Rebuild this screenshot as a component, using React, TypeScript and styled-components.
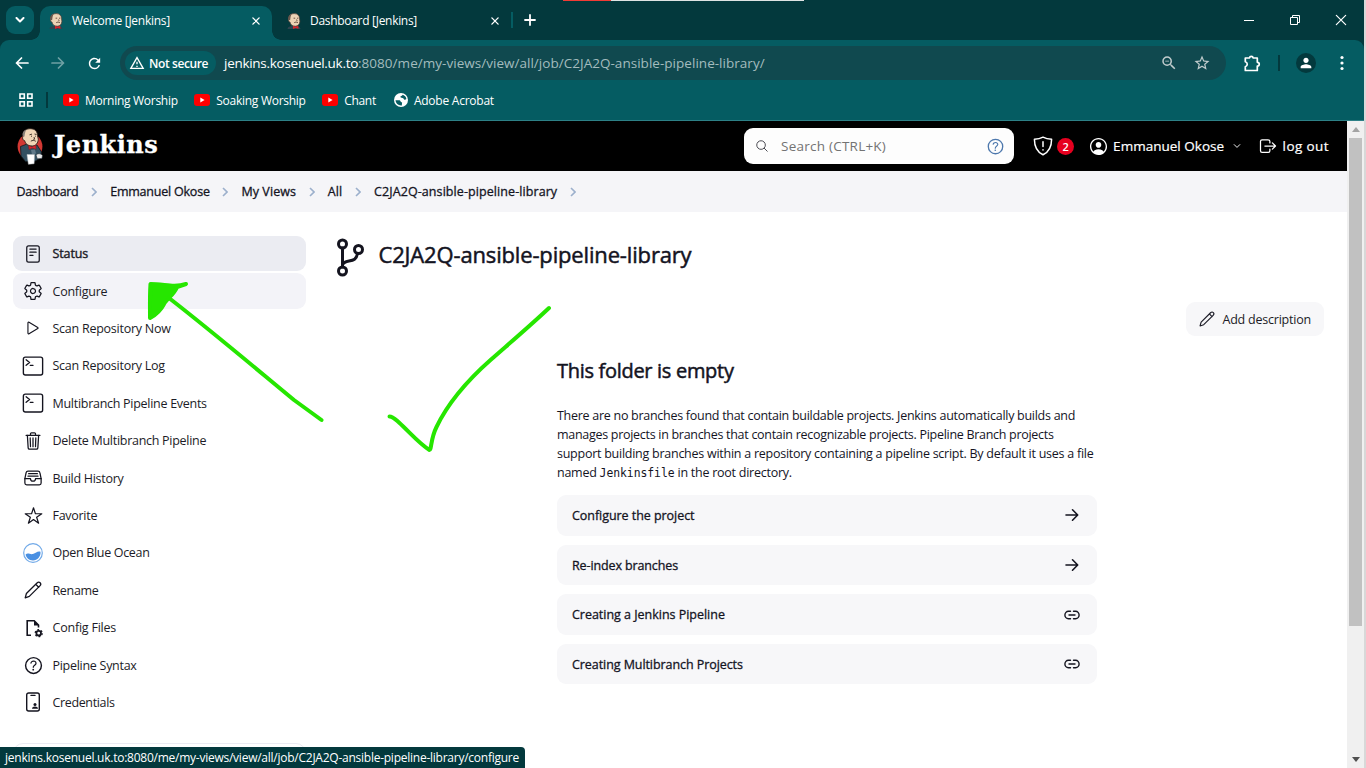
import React from "react";
import styled, { createGlobalStyle, css } from "styled-components";
import {
  IoSettingsOutline,
  IoPlayOutline,
  IoTerminalOutline,
  IoTrashOutline,
  IoFileTrayFullOutline,
  IoStarOutline,
  IoHelpCircleOutline,
  IoPersonCircleOutline,
  IoLogOutOutline,
  IoChevronDown,
  IoSearchOutline,
  IoReaderOutline,
} from "react-icons/io5";
import { MdPerson, MdStarOutline, MdZoomOut, MdRefresh, MdOutlineWarningAmber } from "react-icons/md";

const color = {
  strip: "#03393d",
  toolbar: "#055c62",
  field: "#10494f",
  ink: "#14141f",
  soft: "#f7f7f9",
};

const GlobalStyle = createGlobalStyle`
  * { box-sizing: border-box; }
  body {
    margin: 0;
    overflow: hidden;
    background: #d8d8d8;
    font-family: "Open Sans", "Noto Sans", sans-serif;
    color: ${color.ink};
  }
  svg { display: block; flex: none; }
  h1, h2, p { margin: 0; }
`;

/* $heft thickens regular glyphs to a medium weight */
const Txt = styled.span<{ $track?: number; $heft?: number }>`
  white-space: pre;
  letter-spacing: ${(p) => p.$track ?? 0}px;
  -webkit-text-stroke: ${(p) => p.$heft ?? 0}px currentColor;
`;

const Window = styled.div`
  position: relative;
  width: 1364px;
  height: 768px;
  display: flex;
  flex-direction: column;
  background: #fff;
  overflow: hidden;
`;

/* Browser chrome */
const TabStrip = styled.div`
  height: 40px;
  flex: none;
  display: flex;
  align-items: flex-end;
  padding-left: 6px;
  background: ${color.strip};
  color: #fff;
`;
const TabSearch = styled.div`
  width: 28px;
  height: 28px;
  margin: 0 6px 6px 0;
  border-radius: 9px;
  background: ${color.toolbar};
  display: grid;
  place-items: center;
`;
const Tab = styled.div<{ $active?: boolean }>`
  position: relative;
  width: ${(p) => (p.$active ? 232 : 239)}px;
  height: 34px;
  padding: 0 12px 5px ${(p) => (p.$active ? 8 : 14)}px;
  display: flex;
  align-items: center;
  gap: 8px;
  font-size: 12px;
  border-radius: 10px 10px 0 0;
  ${(p) =>
    p.$active &&
    css`
      background: ${color.toolbar};
      &::before,
      &::after {
        content: "";
        position: absolute;
        bottom: 0;
        width: 9px;
        height: 9px;
      }
      &::before {
        left: -9px;
        background: radial-gradient(circle at 0 0, transparent 8.5px, ${color.toolbar} 9px);
      }
      &::after {
        right: -9px;
        background: radial-gradient(circle at 100% 0, transparent 8.5px, ${color.toolbar} 9px);
      }
    `}
  & > span { flex: 1; }
`;
const TabDivider = styled.div`
  width: 2px;
  height: 16px;
  margin: 0 11px 12px 0;
  background: ${color.toolbar};
`;
const NewTab = styled.div`
  margin-bottom: 14px;
`;
const WindowControls = styled.div`
  margin-left: auto;
  height: 40px;
  padding-right: 17px;
  display: flex;
  align-items: center;
  gap: 34px;
`;
const ToolbarWrap = styled.div`
  flex: none;
  background: ${color.strip};
`;
const Chrome = styled.div`
  height: 81px;
  background: ${color.toolbar};
  border-radius: 9px 9px 0 0;
  border-bottom: 1px solid #2d8086;
  color: #fff;
`;
const Toolbar = styled.div`
  height: 46px;
  padding: 0 14px;
  display: flex;
  align-items: center;
`;
const NavButton = styled.div<{ $dim?: boolean }>`
  width: 36px;
  display: flex;
  padding-left: 1px;
  opacity: ${(p) => (p.$dim ? 0.42 : 1)};
`;
const ReloadButton = styled(NavButton)`
  padding-left: 0;
`;
const Omnibox = styled.div`
  width: 1106px;
  height: 34px;
  margin-left: -2px;
  padding: 0 15px 0 5px;
  display: flex;
  align-items: center;
  border-radius: 17px;
  background: ${color.field};
  font-size: 13.5px;
`;
const SecurityChip = styled.div`
  width: 91px;
  height: 24px;
  margin-right: 8px;
  padding-left: 4px;
  display: flex;
  align-items: center;
  gap: 4px;
  border-radius: 12px;
  background: ${color.toolbar};
  font-size: 12px;
  font-weight: 600;
`;
const UrlPath = styled(Txt)`
  color: #a3bcbe;
  flex: 1;
`;
const FieldIcons = styled.div`
  display: flex;
  gap: 15px;
  color: #c1cccd;
`;
const ToolbarEnd = styled.div`
  flex: 1;
  display: flex;
  align-items: center;
  padding-left: 18px;
`;
const ChromeDivider = styled.div<{ $before: number; $after: number }>`
  width: 2px;
  height: 16px;
  margin: 0 ${(p) => p.$after}px 0 ${(p) => p.$before}px;
  background: ${color.strip};
`;
const Avatar = styled.div`
  width: 20px;
  height: 20px;
  margin-right: 24px;
  display: grid;
  place-items: center;
  border-radius: 50%;
  background: ${color.strip};
`;
const Bookmarks = styled.div`
  height: 28px;
  padding-left: 19px;
  display: flex;
  align-items: center;
  font-size: 12px;
`;
const Bookmark = styled.div<{ $gap: number }>`
  display: flex;
  align-items: center;
  gap: 6px;
  margin-right: ${(p) => p.$gap}px;
`;
const RecordingBar = styled.div`
  position: absolute;
  top: 0;
  left: 563px;
  width: 241px;
  height: 1px;
  background: linear-gradient(90deg, #f23b35 48px, #dfe4e4 48px);
`;

/* Page */
const Viewport = styled.div`
  flex: 1;
  min-height: 0;
  display: flex;
`;
const Page = styled.div`
  width: 1347px;
  display: flex;
  flex-direction: column;
`;
const Header = styled.header`
  height: 50px;
  flex: none;
  padding: 0 18px 0 17px;
  display: flex;
  align-items: center;
  background: #000;
  color: #fff;
  font-size: 13.5px;
`;
const Brand = styled.div`
  flex: 1;
  display: flex;
  align-items: center;
  gap: 10px;
`;
const BrandName = styled(Txt)`
  font-family: "DejaVu Serif", "Liberation Serif", serif;
  font-weight: 700;
  font-size: 24px;
  line-height: 30px;
  padding-bottom: 3px;
`;
const SearchBox = styled.div`
  width: 270px;
  height: 36px;
  padding: 0 8px 0 11px;
  display: flex;
  align-items: center;
  border-radius: 9px;
  background: #fdfdfd;
  color: #34343c;
`;
const Placeholder = styled(Txt)`
  flex: 1;
  margin-left: 12px;
  color: #737373;
`;
const HelpLink = styled.div`
  color: #4d78ad;
`;
const Alerts = styled.div`
  display: flex;
  align-items: center;
  gap: 4px;
  margin-left: 19px;
`;
const Count = styled.span`
  width: 17px;
  height: 17px;
  border-radius: 50%;
  background: #e6001f;
  font-size: 11px;
  font-weight: 600;
  line-height: 17px;
  text-align: center;
`;
const HeaderLink = styled.div<{ $before: number; $gap?: number }>`
  display: flex;
  align-items: center;
  gap: ${(p) => p.$gap ?? 4}px;
  margin-left: ${(p) => p.$before}px;
`;
const Crumbs = styled.nav`
  height: 41px;
  flex: none;
  padding-left: 16.5px;
  display: flex;
  align-items: center;
  background: #f5f5f8;
  font-size: 12.5px;
`;
const CrumbArrow = styled.svg`
  margin: 1px 13px 0 12.7px;
  stroke: #9cb0cc;
  fill: none;
  stroke-width: 1.6;
`;
const Columns = styled.div`
  flex: 1;
  min-height: 0;
  display: flex;
  padding: 24px 23px 0 13px;
`;
const Sidebar = styled.aside`
  width: 293px;
  display: flex;
  flex-direction: column;
  gap: 2.4px;
`;
const Task = styled.div<{ $tone?: "active" | "hover" }>`
  height: ${(p) => (p.$tone === "hover" ? 35.8 : 35)}px;
  margin-bottom: ${(p) => (p.$tone === "hover" ? -0.6 : 0)}px;
  flex: none;
  padding-left: 9px;
  display: flex;
  align-items: center;
  gap: 8.5px;
  border-radius: 9px;
  font-size: 12.5px;
  color: #1c1c27;
  background: ${(p) => (p.$tone === "active" ? "#ebecf2" : p.$tone === "hover" ? "#f3f3f8" : "transparent")};
`;
const IconSlot = styled.div`
  width: 22px;
  display: flex;
  justify-content: center;
  color: ${color.ink};
`;
const HistoryCard = styled.div`
  height: 60px;
  flex: none;
  margin-top: 20.6px;
  border: 1px solid #ebebf2;
  border-radius: 10px;
`;
const Main = styled.main`
  flex: 1;
  padding-left: 30px;
  display: flex;
  flex-direction: column;
`;
const Title = styled.h1`
  height: 42px;
  display: flex;
  align-items: center;
  gap: 13.5px;
  font-size: 22px;
  font-weight: 400;
  & > span { padding-bottom: 7px; }
`;
const DescriptionButton = styled.div`
  align-self: flex-end;
  width: 138px;
  height: 34px;
  margin-top: 24px;
  padding-left: 13px;
  display: flex;
  align-items: center;
  gap: 7.5px;
  border-radius: 9px;
  background: ${color.soft};
  font-size: 12.5px;
  color: #1c1c27;
`;
const Empty = styled.section`
  width: 540px;
  margin: 20px 0 0 221px;
`;
const EmptyTitle = styled.h2`
  font-size: 20px;
  line-height: 30px;
  font-weight: 400;
`;
const Copy = styled.p`
  margin-top: 20px;
  display: flex;
  flex-direction: column;
  font-size: 12.5px;
  line-height: 19px;
`;
const Code = styled.code`
  font-family: "DejaVu Sans Mono", monospace;
  font-size: 11.4px;
  letter-spacing: -0.05px;
`;
const Actions = styled.div`
  margin-top: 12.3px;
  display: flex;
  flex-direction: column;
  gap: 9.3px;
`;
const Action = styled.div`
  height: 40.3px;
  padding: 0 15px;
  display: flex;
  align-items: center;
  justify-content: space-between;
  border-radius: 9px;
  background: ${color.soft};
  font-size: 12.5px;
`;
const ActionIcon = styled.div`
  width: 20px;
  display: flex;
  justify-content: center;
`;
const ScrollTrack = styled.div`
  width: 17px;
  display: flex;
  flex-direction: column;
  align-items: center;
  background: #f0f0f0;
`;
const ScrollThumb = styled.div`
  width: 13px;
  height: 488px;
  background: #c1c1c1;
  margin-bottom: auto;
`;
const ScrollButton = styled.div`
  height: 17px;
  display: grid;
  place-items: center;
`;
const LinkPreview = styled.div`
  position: absolute;
  left: 0;
  bottom: 0;
  width: 525px;
  height: 21px;
  padding-left: 5px;
  display: flex;
  align-items: center;
  border-radius: 0 4px 0 0;
  background: ${color.strip};
  color: #fff;
  font-size: 12px;
`;
const Ink = styled.svg`
  position: absolute;
  left: 140px;
  top: 275px;
  fill: none;
  stroke: #26e600;
  stroke-linecap: round;
  stroke-linejoin: round;
`;

const Stroke = styled.svg<{ $w?: number }>`
  fill: none;
  stroke: currentColor;
  stroke-width: ${(p) => p.$w ?? 1.5};
  stroke-linecap: round;
  stroke-linejoin: round;
`;

const Butler = () => (
  <svg width="27" height="37" viewBox="0 0 27 37">
    <ellipse cx="13" cy="18.500" rx="12.400" ry="13" fill="#d33833" />
    <path d="M3.500 18.500 10 16l10 1 4.500 7-1 6-7 4-8-.5L4 28z" fill="#335061" stroke="#141b20" strokeWidth=".8" />
    <path d="M6 6.500C6.500 2.500 9.500.6 13.500.7c4.500 0 7 2.800 7 7l.8 3.500c-.3 4-2.300 6.600-6 6.800-4.500 0-7-2.200-7.500-5.200-2.200-.3-2.800-3-1.800-4.300z" fill="#f0d6b7" stroke="#33261f" strokeWidth=".9" />
    <path d="M6.200 8.500C4.500 6 6.500 2 9.500 1.800c-1.500 2-1.700 4.500-2 6.700z" fill="#8a8179" />
    <path d="M12.500 6.800l2.500-.7M17.500 6l2 .5M14 8.200h1M18 8.200h.8M17 9l.6 2.200-1.300.2M13.800 13.200c1.500-1 3.500-1 5 .1" stroke="#33261f" strokeWidth=".9" fill="none" />
    <path d="M11.500 17.300l3.300 1.600 4-1.800.3 4.200-3.800-1.200-3.300 1.400z" fill="#d9262f" stroke="#81161b" strokeWidth=".5" />
    <path d="M14 22l4-.5 1 4-4 1z" fill="#607989" />
    <path d="M10 26.500h7.500l-.4 9.200-5.700.6z" fill="#fff" stroke="#b8bfc3" strokeWidth=".5" />
    <path d="M19 27c2-2 5-1.500 6.500.5l-.6 3-4.600.3z" fill="#e9e9e9" stroke="#27333b" strokeWidth=".6" />
  </svg>
);
const ButlerSmall = () => (
  <svg width="16" height="16" viewBox="0 0 16 16">
    <path d="M1.500 16c.3-2.500 2.500-3.200 6.500-3 4-.2 6 .5 6.500 3z" fill="#2d4450" />
    <path d="M2.700 5C3 2 5 .6 8.200.6c3.400 0 5.300 2 5.300 5l.4 2.700c-.2 3-1.700 4.700-4.500 4.900-3.200 0-4.900-1.600-5.300-4-1.500-.2-2-2.200-1.400-4.200z" fill="#ecd3b6" stroke="#4d3a30" strokeWidth=".7" />
    <path d="M2.500 7C1.500 4 3 1.500 5.700 1.200 4.400 2.800 4.500 5 4.100 7.300z" fill="#66564c" />
    <path d="M7.600 5.200h1.600M11 5.200h1.300M10.600 6.500l.5 1.600M8.200 9.700c1-.8 2.700-.8 3.800 0" stroke="#5d453a" strokeWidth=".9" fill="none" />
    <path d="M7 12.800l2.300 1 3-1 .2 3-2.900-.8-2.600.9z" fill="#d6232c" />
  </svg>
);
const Cross = ({ size = 8, w = 1.5 }: { size?: number; w?: number }) => (
  <Stroke $w={w} width={size} height={size} viewBox="0 0 9 9"><path d="M1 1l7 7M8 1L1 8" /></Stroke>
);
const YouTube = () => (
  <svg width="16" height="12" viewBox="0 0 16 12">
    <rect width="16" height="12" rx="3" fill="#f00" />
    <path d="M6.300 3.500v5L10.600 6z" fill="#fff" />
  </svg>
);
const Globe = () => (
  <svg width="14" height="14" viewBox="0 0 14 14">
    <circle cx="7" cy="7" r="7" fill="#fff" />
    <path d="M1.500 7.300h3.300c2.400 0 1.200 2.200 3.300 2.200l-.3 2.900c-3.300.4-6-2-6.300-5.100zM8.700 1.700c2 .6 3.400 2.300 3.700 4.300-1.500 1.500-2.300.6-2.900-.5-.9-.9-3.100-.3-3.100-1.700 0-1.100 1.800-.8 2.300-2.100z" fill={color.toolbar} />
  </svg>
);
const Puzzle = () => (
  <Stroke $w={1.7} width="17" height="17" viewBox="0 0 17 17">
    <path d="M1.300 3h4.200c.2-2.200 3.400-2.200 3.600 0H13.300v4.300c2.600.2 2.600 3.500 0 3.700v4.500H1.300v-3.800c2.600-.7 2.600-4.200 0-4.900z" />
  </Stroke>
);
const Pencil = ({ size = 18 }: { size?: number }) => (
  <Stroke $w={1.3} width={size} height={size} viewBox="0 0 18 18">
    <path d="M1.200 16.800l1.200-4.300L13 2c1-1 2.200-1.100 3.100-.2s.8 2.100-.2 3.100L5.300 15.400zM11.700 3.300l3 3" />
  </Stroke>
);
const Arrow = () => (
  <Stroke $w={1.6} width="14" height="14" viewBox="0 0 14 14"><path d="M1 7h11.500M7.500 1.800 12.700 7l-5.200 5.200" /></Stroke>
);
const Chain = () => (
  <Stroke $w={1.4} width="16" height="10" viewBox="0 0 16 10">
    <path d="M6.500 1.300H4.400a3.500 3.700 0 0 0 0 7.400h2.100M9.500 1.300h2.100a3.500 3.700 0 0 1 0 7.400H9.500M5 5h6" />
  </Stroke>
);
const BlueOcean = () => (
  <svg width="20" height="20" viewBox="0 0 20 20">
    <circle cx="10" cy="10" r="9.300" fill="#fff" stroke="#72aae8" strokeWidth="1.200" />
    <path d="M2.600 11.500c2.300-2.200 4.300.2 7.300-.5 3.200-.8 4.300-3.300 7.600-2.300.5 4.800-3.200 8.700-7.500 8.700-3.900 0-6.900-2.500-7.400-5.900z" fill="#4a90e2" />
  </svg>
);
const ConfigFile = () => (
  <svg width="20" height="20" viewBox="0 0 20 20" fill="none" stroke="currentColor">
    <path d="M8 17.200H4.200V2.800h7l4.300 4.300v2.400" strokeWidth="1.600" />
    <path d="M11 2.500v5h5z" fill="currentColor" stroke="none" />
    <circle cx="15.700" cy="15.200" r="2.300" strokeWidth="1.800" />
    <circle cx="15.700" cy="15.200" r="3.500" strokeWidth="1.300" strokeDasharray="1.800 1.870" />
  </svg>
);
const Badge = () => (
  <Stroke width="20" height="20" viewBox="0 0 20 20" $w={1.4}>
    <rect x="3.700" y="1" width="12.600" height="18" rx="2" />
    <path d="M8 3.400h4" />
    <circle cx="12" cy="12.600" r="1.500" fill="currentColor" stroke="none" />
    <path d="M9 16.800c0-3 6-3 6 0z" fill="currentColor" stroke="none" />
  </Stroke>
);

const tasks: { label: string; icon: React.ReactNode; tone?: "active" | "hover"; track?: number; heft?: number }[] = [
  { label: "Status", icon: <IoReaderOutline size={20} />, tone: "active", track: -0.12, heft: 0.4 },
  { label: "Configure", icon: <IoSettingsOutline size={20} />, tone: "hover", track: -0.24 },
  { label: "Scan Repository Now", icon: <IoPlayOutline size={18} />, track: -0.25 },
  { label: "Scan Repository Log", icon: <IoTerminalOutline size={22} />, track: -0.25 },
  { label: "Multibranch Pipeline Events", icon: <IoTerminalOutline size={22} /> },
  { label: "Delete Multibranch Pipeline", icon: <IoTrashOutline size={20} /> },
  { label: "Build History", icon: <IoFileTrayFullOutline size={20} /> },
  { label: "Favorite", icon: <IoStarOutline size={19} /> },
  { label: "Open Blue Ocean", icon: <BlueOcean />, track: -0.32 },
  { label: "Rename", icon: <Pencil />, track: -0.34 },
  { label: "Config Files", icon: <ConfigFile />, track: -0.22 },
  { label: "Pipeline Syntax", icon: <IoHelpCircleOutline size={23} /> },
  { label: "Credentials", icon: <Badge />, track: -0.36 },
];
const crumbs: [string, number][] = [
  ["Dashboard", -0.28],
  ["Emmanuel Okose", -0.22],
  ["My Views", 0.08],
  ["All", 0.15],
  ["C2JA2Q-ansible-pipeline-library", 0.08],
];
const copy: [string, number][] = [
  ["There are no branches found that contain buildable projects. Jenkins automatically builds and", -0.277],
  ["manages projects in branches that contain recognizable projects. Pipeline Branch projects", -0.292],
  ["support building branches within a repository containing a pipeline script. By default it uses a file", -0.255],
];
const actions: [string, React.ReactNode, number][] = [
  ["Configure the project", <Arrow />, -0.05],
  ["Re-index branches", <Arrow />, -0.12],
  ["Creating a Jenkins Pipeline", <Chain />, -0.02],
  ["Creating Multibranch Projects", <Chain />, -0.07],
];

export default function App() {
  return (
    <>
      <GlobalStyle />
      <Window>
        <TabStrip>
          <TabSearch><Stroke $w={2} width="10" height="6" viewBox="0 0 10 6"><path d="M1.500 1 5 4.500 8.500 1" /></Stroke></TabSearch>
          <Tab $active>
            <ButlerSmall /><Txt $track={-0.257}>Welcome [Jenkins]</Txt><Cross />
          </Tab>
          <Tab>
            <ButlerSmall /><Txt $track={-0.297}>Dashboard [Jenkins]</Txt><Cross />
          </Tab>
          <TabDivider />
          <NewTab><Stroke $w={1.8} width="12" height="12" viewBox="0 0 12 12"><path d="M6 1v10M1 6h10" /></Stroke></NewTab>
          <WindowControls>
            <svg width="12" height="12"><path d="M1 6.500h10" stroke="#fff" /></svg>
            <svg width="12" height="12" fill="none" stroke="#fff"><path d="M1.500 3.500h7v7h-7zM3.500 3.500v-2h7v7h-2" /></svg>
            <Cross size={12} w={0.9} />
          </WindowControls>
        </TabStrip>
        <ToolbarWrap>
          <Chrome>
            <Toolbar>
              <NavButton><Stroke $w={1.7} width="14" height="12" viewBox="0 0 14 12"><path d="M13 6H1.500M6.500 1l-5 5 5 5" /></Stroke></NavButton>
              <NavButton $dim><Stroke $w={1.7} width="14" height="12" viewBox="0 0 14 12"><path d="M1 6h11.500M7.500 1l5 5-5 5" /></Stroke></NavButton>
              <ReloadButton><MdRefresh size={17} /></ReloadButton>
              <Omnibox>
                <SecurityChip><MdOutlineWarningAmber size={16} /><Txt $track={-0.4}>Not secure</Txt></SecurityChip>
                <Txt $track={-0.28}>jenkins.kosenuel.uk.to</Txt>
                <UrlPath $track={0.03}>:8080/me/my-views/view/all/job/C2JA2Q-ansible-pipeline-library/</UrlPath>
                <FieldIcons><MdZoomOut size={18} /><MdStarOutline size={18} /></FieldIcons>
              </Omnibox>
              <ToolbarEnd>
                <Puzzle />
                <ChromeDivider $before={17} $after={16} />
                <Avatar><MdPerson size={16} /></Avatar>
                <svg width="4" height="16" fill="#fff"><circle cx="2" cy="2.500" r="1.600" /><circle cx="2" cy="8" r="1.600" /><circle cx="2" cy="13.500" r="1.600" /></svg>
              </ToolbarEnd>
            </Toolbar>
            <Bookmarks>
              <svg width="14" height="14" fill="none" stroke="#fff" strokeWidth="1.600"><path d="M1 1h4.300v4.300H1zM8.700 1H13v4.300H8.700zM1 8.700h4.300V13H1zM8.700 8.700H13V13H8.700z" /></svg>
              <ChromeDivider $before={13} $after={15} />
              <Bookmark $gap={16.5}><YouTube /><Txt $track={-0.28}>Morning Worship</Txt></Bookmark>
              <Bookmark $gap={16.5}><YouTube /><Txt $track={-0.27}>Soaking Worship</Txt></Bookmark>
              <Bookmark $gap={18}><YouTube /><Txt $track={-0.3}>Chant</Txt></Bookmark>
              <Bookmark $gap={0}><Globe /><Txt $track={-0.24}>Adobe Acrobat</Txt></Bookmark>
            </Bookmarks>
          </Chrome>
        </ToolbarWrap>

        <Viewport>
          <Page>
            <Header>
              <Brand><Butler /><BrandName $track={0.5} $heft={0.3}>Jenkins</BrandName></Brand>
              <SearchBox>
                <IoSearchOutline size={14} />
                <Placeholder $track={0.23}>Search (CTRL+K)</Placeholder>
                <HelpLink><IoHelpCircleOutline size={21} /></HelpLink>
              </SearchBox>
              <Alerts>
                <Stroke width="20" height="20" viewBox="0 0 20 20" $w={1.5}>
                  <path d="M10 1.200c2.300 1.300 5.300 2 8.600 2 0 7.500-2.600 12.700-8.600 15.600C4 15.900 1.400 10.700 1.400 3.200c3.300 0 6.300-.7 8.600-2zM10 5.800v4.800M10 13.800v.2" />
                </Stroke>
                <Count>2</Count>
              </Alerts>
              <HeaderLink $before={14}><IoPersonCircleOutline size={21} /><Txt $heft={0.2} $track={0.015}>Emmanuel Okose</Txt></HeaderLink>
              <HeaderLink $before={8}><IoChevronDown size={10} /></HeaderLink>
              <HeaderLink $before={16} $gap={4.5}><IoLogOutOutline size={20} /><Txt $heft={0.2} $track={0.4}>log out</Txt></HeaderLink>
            </Header>
            <Crumbs>
              {crumbs.map(([label, track]) => (
                <React.Fragment key={label}>
                  <Txt $track={track} $heft={0.3}>{label}</Txt>
                  <CrumbArrow width="6" height="10" viewBox="0 0 6 10"><path d="M1 1l4 4-4 4" /></CrumbArrow>
                </React.Fragment>
              ))}
            </Crumbs>
            <Columns>
              <Sidebar>
                {tasks.map((t) => (
                  <Task key={t.label} $tone={t.tone}>
                    <IconSlot>{t.icon}</IconSlot>
                    <Txt $track={t.track ?? -0.28} $heft={t.heft}>{t.label}</Txt>
                  </Task>
                ))}
                <HistoryCard />
              </Sidebar>
              <Main>
                <Title>
                  <Stroke $w={3} width="29" height="39" viewBox="0 0 29 39">
                    <circle cx="6.500" cy="6" r="4" />
                    <circle cx="22.500" cy="11.500" r="4" />
                    <circle cx="6.500" cy="33" r="4" />
                    <path d="M6.500 10v19M21.500 15.500c-1 6-4 6.700-8.500 7.500-3.500.6-6 2-6.500 4" />
                  </Stroke>
                  <Txt $track={-0.158} $heft={0.5}>C2JA2Q-ansible-pipeline-library</Txt>
                </Title>
                <DescriptionButton><Pencil size={16} /><Txt $track={-0.22}>Add description</Txt></DescriptionButton>
                <Empty>
                  <EmptyTitle><Txt $track={-0.3} $heft={0.5}>This folder is empty</Txt></EmptyTitle>
                  <Copy>
                    {copy.map(([line, track]) => <Txt key={line} $track={track}>{line}</Txt>)}
                    <Txt $track={-0.25}>named <Code>Jenkinsfile</Code> in the root directory.</Txt>
                  </Copy>
                  <Actions>
                    {actions.map(([label, icon, track]) => (
                      <Action key={label}><Txt $track={track} $heft={0.3}>{label}</Txt><ActionIcon>{icon}</ActionIcon></Action>
                    ))}
                  </Actions>
                </Empty>
              </Main>
            </Columns>
          </Page>
          <ScrollTrack>
            <ScrollButton><svg width="8" height="5"><path d="M0 5 4 0l4 5z" fill="#a3a3a3" /></svg></ScrollButton>
            <ScrollThumb />
            <ScrollButton><svg width="8" height="5"><path d="M0 0h8L4 5z" fill="#505050" /></svg></ScrollButton>
          </ScrollTrack>
        </Viewport>

        <LinkPreview><Txt $track={-0.248}>jenkins.kosenuel.uk.to:8080/me/my-views/view/all/job/C2JA2Q-ansible-pipeline-library/configure</Txt></LinkPreview>
        <Ink width="420" height="185" viewBox="140 275 420 185" strokeWidth="4">
          <path d="M321.500 420 294 400C254 367 214 333 169 298" />
          <path d="M186 284c-6 2-10 2-16 1.500s-13-1.500-19.500-1.500c-.8 11-.5 22-.5 34 7-4 11-8 14-14 3-5 11-11 13-17z" fill="#26e600" />
          <path d="M389.500 416.500c3.500 0 6 3 9.500 6 11 10 20 21 30.500 27.500 2 0 1-11 7-23 11-23 28-44 54-67C511 342 531 325 549 308" />
        </Ink>
        <RecordingBar />
      </Window>
    </>
  );
}
